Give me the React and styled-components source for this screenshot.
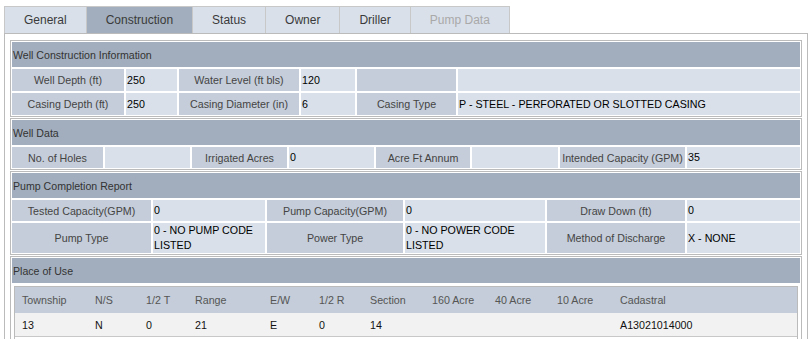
import React from 'react';
import styled, { createGlobalStyle } from 'styled-components';

const GlobalStyle = createGlobalStyle`
  html, body {
    margin: 0;
    padding: 0;
    background: #fff;
    overflow: hidden;
  }
  body {
    font-family: "Liberation Sans", Arial, sans-serif;
    color: #333;
  }
`;

const Page = styled.div`
  box-sizing: border-box;
  width: 808px;
  padding: 6px 0 0 4px;
`;

const TabBar = styled.div`
  display: flex;
  height: 27px;
`;

const Tab = styled.div`
  display: flex;
  align-items: center;
  padding: 0 19px;
  border-top: 1px solid #c8c8c8;
  border-right: 1px solid #c8c8c8;
  &:first-child {
    border-left: 1px solid #c8c8c8;
  }
  background: ${p => (p.$active ? '#a2aebd' : '#d9e0ea')};
  color: ${p => (p.$disabled ? '#a9a9a9' : '#3a3a3a')};
  font-size: 12px;
  cursor: default;
`;

const Panel = styled.div`
  border: 1px solid #bbb;
  padding: 6px 5px 0;
  min-height: 360px;
`;

const Section = styled.div`
  display: flex;
  flex-direction: column;
  gap: 2px;
  border: 1px solid #bbb;
  padding: 1px;
  margin-bottom: 1px;
`;

const SectionHeader = styled.div`
  height: 25px;
  display: flex;
  align-items: center;
  padding-left: 1px;
  background: #a2aebd;
  color: #333;
  font-size: 10.6px;
`;

const Row = styled.div`
  display: grid;
  grid-template-columns: ${p => p.$cols};
  column-gap: 2px;
  min-height: ${p => p.$h || 21}px;
`;

const Label = styled.div`
  display: flex;
  align-items: center;
  justify-content: center;
  white-space: nowrap;
  background: #c4cdd9;
  color: #444;
  font-size: 10.7px;
`;

const Value = styled.div`
  display: flex;
  align-items: center;
  padding: 0 1px;
  background: #d9e0ea;
  color: #000;
  font-size: 10.7px;
  line-height: 15px;
`;

const UseTable = styled.div`
  margin: 1px 2px 0;
  border: 1px solid #bbb;
`;

const UseRow = styled.div`
  display: grid;
  grid-template-columns: 73px 51px 49px 75px 49px 51px 62px 63px 62px 63px 1fr;
  height: ${p => p.$h}px;
  background: ${p => p.$bg};
  border-bottom: ${p => (p.$line ? '1px solid #c8c8c8' : 'none')};
  color: ${p => p.$color};
  font-size: 10.7px;
`;

const UseCell = styled.div`
  display: flex;
  align-items: center;
  padding-left: 7px;
  white-space: nowrap;
`;

const tabs = [
  { name: 'General' },
  { name: 'Construction', active: true },
  { name: 'Status' },
  { name: 'Owner' },
  { name: 'Driller' },
  { name: 'Pump Data', disabled: true },
];

const sections = [
  {
    title: 'Well Construction Information',
    cols: '112px 51px 120px 54px 99px 1fr',
    h: 22,
    rows: [
      [['Well Depth (ft)', '250'], ['Water Level (ft bls)', '120'], ['', '']],
      [['Casing Depth (ft)', '250'], ['Casing Diameter (in)', '6'], ['Casing Type', 'P - STEEL - PERFORATED OR SLOTTED CASING']],
    ],
  },
  {
    title: 'Well Data',
    cols: '91px 85px 95px 85px 94px 86px 125px 1fr',
    rows: [
      [['No. of Holes', ''], ['Irrigated Acres', '0'], ['Acre Ft Annum', ''], ['Intended Capacity (GPM)', '35']],
    ],
  },
  {
    title: 'Pump Completion Report',
    cols: '139px 112px 136px 140px 138px 1fr',
    rows: [
      [['Tested Capacity(GPM)', '0'], ['Pump Capacity(GPM)', '0'], ['Draw Down (ft)', '0']],
      [['Pump Type', '0 - NO PUMP CODE LISTED'], ['Power Type', '0 - NO POWER CODE LISTED'], ['Method of Discharge', 'X - NONE']],
    ],
  },
];

const useHead = ['Township', 'N/S', '1/2 T', 'Range', 'E/W', '1/2 R', 'Section', '160 Acre', '40 Acre', '10 Acre', 'Cadastral'];
const useData = ['13', 'N', '0', '21', 'E', '0', '14', '', '', '', 'A13021014000'];

export default function App() {
  return (
    <Page>
      <GlobalStyle />
      <TabBar>
        {tabs.map(t => (
          <Tab key={t.name} $active={t.active} $disabled={t.disabled}>
            {t.name}
          </Tab>
        ))}
      </TabBar>
      <Panel>
        {sections.map(s => (
          <Section key={s.title}>
            <SectionHeader>{s.title}</SectionHeader>
            {s.rows.map((row, i) => (
              <Row key={i} $cols={s.cols} $h={s.h}>
                {row.map(([label, value], j) => (
                  <React.Fragment key={j}>
                    <Label>{label}</Label>
                    <Value>{value}</Value>
                  </React.Fragment>
                ))}
              </Row>
            ))}
          </Section>
        ))}
        <Section>
          <SectionHeader>Place of Use</SectionHeader>
          <UseTable>
            <UseRow $h={26} $bg="#c4cdd9" $color="#555">
              {useHead.map(h => <UseCell key={h}>{h}</UseCell>)}
            </UseRow>
            <UseRow $h={23} $bg="#f2f2f2" $color="#111" $line>
              {useData.map((d, i) => <UseCell key={i}>{d}</UseCell>)}
            </UseRow>
            <UseRow $h={23} $bg="#fff" $color="#111" />
          </UseTable>
        </Section>
      </Panel>
    </Page>
  );
}
